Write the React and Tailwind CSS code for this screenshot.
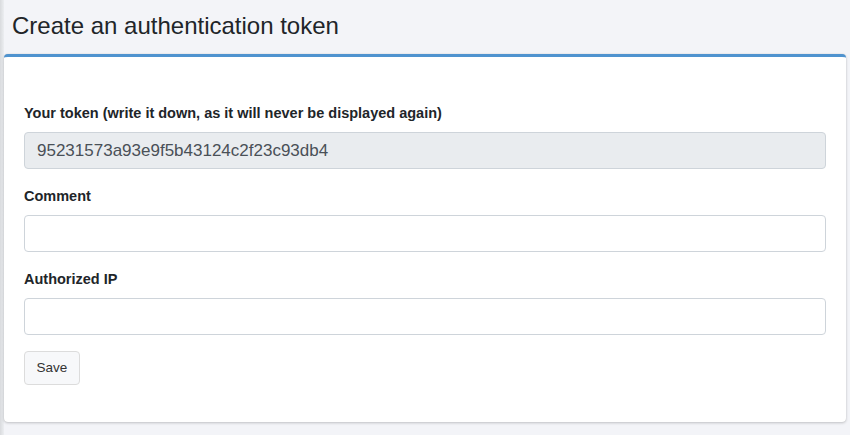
import React from "react";

export default function App() {
  const font = { fontFamily: '"Liberation Sans", Arial, sans-serif' };
  return (
    <div className="w-[850px] h-[435px] overflow-hidden bg-[#f3f4f8] flex" style={font}>
      <div className="w-[4px] h-full bg-gradient-to-r from-[#d9dbde] to-[#eceef1] shrink-0" />
      <div className="flex-1 flex flex-col">
        <div className="h-[54px] flex items-center pl-[8px]">
          <h1 className="text-[24px] leading-none text-[#212529] font-normal mt-[-2px]">
            Create an authentication token
          </h1>
        </div>
        <div className="w-[842px] bg-white rounded-[4px] border-t-[3px] border-[#4f93cf] shadow-[0_0_1px_rgba(0,0,0,0.15),0_1px_3px_rgba(0,0,0,0.2)] px-[20px] pt-[45px] pb-[37px]">
          <div className="mb-[16px]">
            <label className="block text-[14.5px] leading-[22px] font-bold text-[#212529] mb-[8px]">
              Your token (write it down, as it will never be displayed again)
            </label>
            <div className="h-[37px] rounded-[4px] border border-[#ced4da] bg-[#e9ecef] flex items-center px-[12px] text-[17px] text-[#495057]">
              95231573a93e9f5b43124c2f23c93db4
            </div>
          </div>
          <div className="mb-[16px]">
            <label className="block text-[14.5px] leading-[22px] font-bold text-[#212529] mb-[8px]">
              Comment
            </label>
            <div className="h-[37px] rounded-[4px] border border-[#ced4da] bg-white" />
          </div>
          <div className="mb-[16px]">
            <label className="block text-[14.5px] leading-[22px] font-bold text-[#212529] mb-[8px]">
              Authorized IP
            </label>
            <div className="h-[37px] rounded-[4px] border border-[#ced4da] bg-white" />
          </div>
          <button className="h-[34px] w-[56px] rounded-[4px] border border-[#dcdcdc] bg-[#f7f8fa] text-[13.5px] text-[#333]">
            Save
          </button>
        </div>
      </div>
    </div>
  );
}
